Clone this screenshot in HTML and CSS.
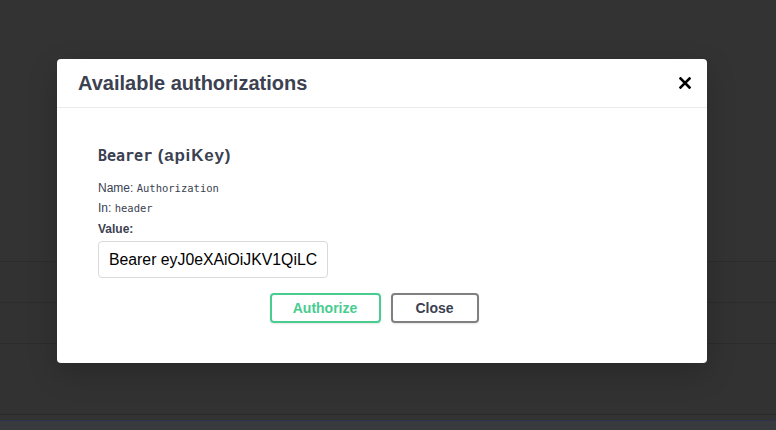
FILE: index.html
```html
<!DOCTYPE html>
<html>
<head>
<meta charset="utf-8">
<link rel="stylesheet" href="styles.css">
</head>
<body>
<div class="page">
  <div class="top"></div>
  <div class="row"></div>
  <div class="row"></div>
  <div class="row tall"></div>
  <div class="row short"></div>
  <div class="footer"></div>
</div>
<div class="modal">
  <div class="modal-header">
    <h3 class="modal-title">Available authorizations</h3>
    <button class="close-btn" aria-label="close">
      <svg width="12" height="12" viewBox="0 0 12 12"><path d="M1.5 1.5L10.5 10.5M10.5 1.5L1.5 10.5" stroke="#000" stroke-width="2.6" stroke-linecap="square"/></svg>
    </button>
  </div>
  <div class="modal-content">
    <div class="auth-container">
      <h4 class="auth-title"><code class="mono">Bearer</code> (apiKey)</h4>
      <p class="meta">Name: <code class="code">Authorization</code></p>
      <p class="meta">In: <code class="code">header</code></p>
      <label class="value-label">Value:</label>
      <div class="input-box">Bearer eyJ0eXAiOiJKV1QiLC</div>
      <div class="btn-wrapper">
        <button class="btn btn-auth">Authorize</button>
        <button class="btn btn-close">Close</button>
      </div>
    </div>
  </div>
</div>
</body>
</html>
```

FILE: styles.css
```css
html, body {
  margin: 0;
  padding: 0;
}
body {
  width: 776px;
  height: 430px;
  overflow: hidden;
  background: #333333;
  font-family: "Liberation Sans", Arial, sans-serif;
  position: relative;
}
.page {
  display: flex;
  flex-direction: column;
  height: 430px;
}
.top {
  height: 261px;
  background: #333333;
}
.row {
  height: 40px;
  border-top: 1px solid #2c2c2c;
  background: #323232;
}
.row.tall {
  height: 70px;
}
.row.short {
  height: 5px;
  border-top: 1px solid #2a2a2a;
  background: #333333;
}
.footer {
  flex: 1;
  border-top: 1px solid #2b3450;
  background: #393a3d;
}
.modal {
  position: absolute;
  left: 57px;
  top: 59px;
  width: 650px;
  height: 304px;
  background: #ffffff;
  border-radius: 4px;
  box-shadow: 0 10px 30px rgba(0, 0, 0, 0.2);
  display: flex;
  flex-direction: column;
}
.modal-header {
  height: 48px;
  border-bottom: 1px solid #ebebeb;
  display: flex;
  align-items: center;
  justify-content: space-between;
  padding: 0 16px 0 21px;
}
.modal-title {
  margin: 0;
  font-size: 20px;
  font-weight: bold;
  color: #3b4151;
}
.close-btn {
  border: none;
  background: none;
  padding: 0;
  width: 12px;
  height: 12px;
  display: flex;
}
.modal-content {
  padding: 20px 20px 0 41px;
}
.auth-container {
  display: flex;
  flex-direction: column;
}
.auth-title {
  margin: 18px 0 12px;
  font-family: "Liberation Sans", Arial, sans-serif;
  font-size: 17px;
  letter-spacing: 0.8px;
  font-weight: bold;
  color: #3b4151;
  line-height: 20px;
}
.mono {
  font-family: "DejaVu Sans Mono", monospace;
  font-size: 15px;
  letter-spacing: 0;
}
.meta {
  margin: 0;
  font-size: 12px;
  line-height: 20px;
  color: #3b4151;
}
.code {
  font-family: "DejaVu Sans Mono", monospace;
  font-size: 10.5px;
}
.value-label {
  margin-top: 3px;
  font-size: 12px;
  font-weight: bold;
  line-height: 16px;
  color: #3b4151;
}
.input-box {
  margin-top: 4px;
  width: 208px;
  height: 35px;
  padding: 0 10px;
  border: 1px solid #d9d9d9;
  border-radius: 4px;
  font-size: 15.8px;
  line-height: 35px;
  color: #000;
  white-space: nowrap;
  overflow: hidden;
}
.btn-wrapper {
  display: flex;
  justify-content: center;
  gap: 10px;
  margin-top: 15px;
  margin-left: -21px;
}
.btn {
  height: 30px;
  border-radius: 4px;
  background: transparent;
  font-family: "Liberation Sans", Arial, sans-serif;
  font-size: 14px;
  font-weight: bold;
  box-shadow: 0 1px 2px rgba(0, 0, 0, 0.1);
}
.btn-auth {
  width: 111px;
  border: 2px solid #49cc90;
  color: #49cc90;
}
.btn-close {
  width: 88px;
  border: 2px solid #808080;
  color: #3b4151;
  margin-right: 16px;
}
```
